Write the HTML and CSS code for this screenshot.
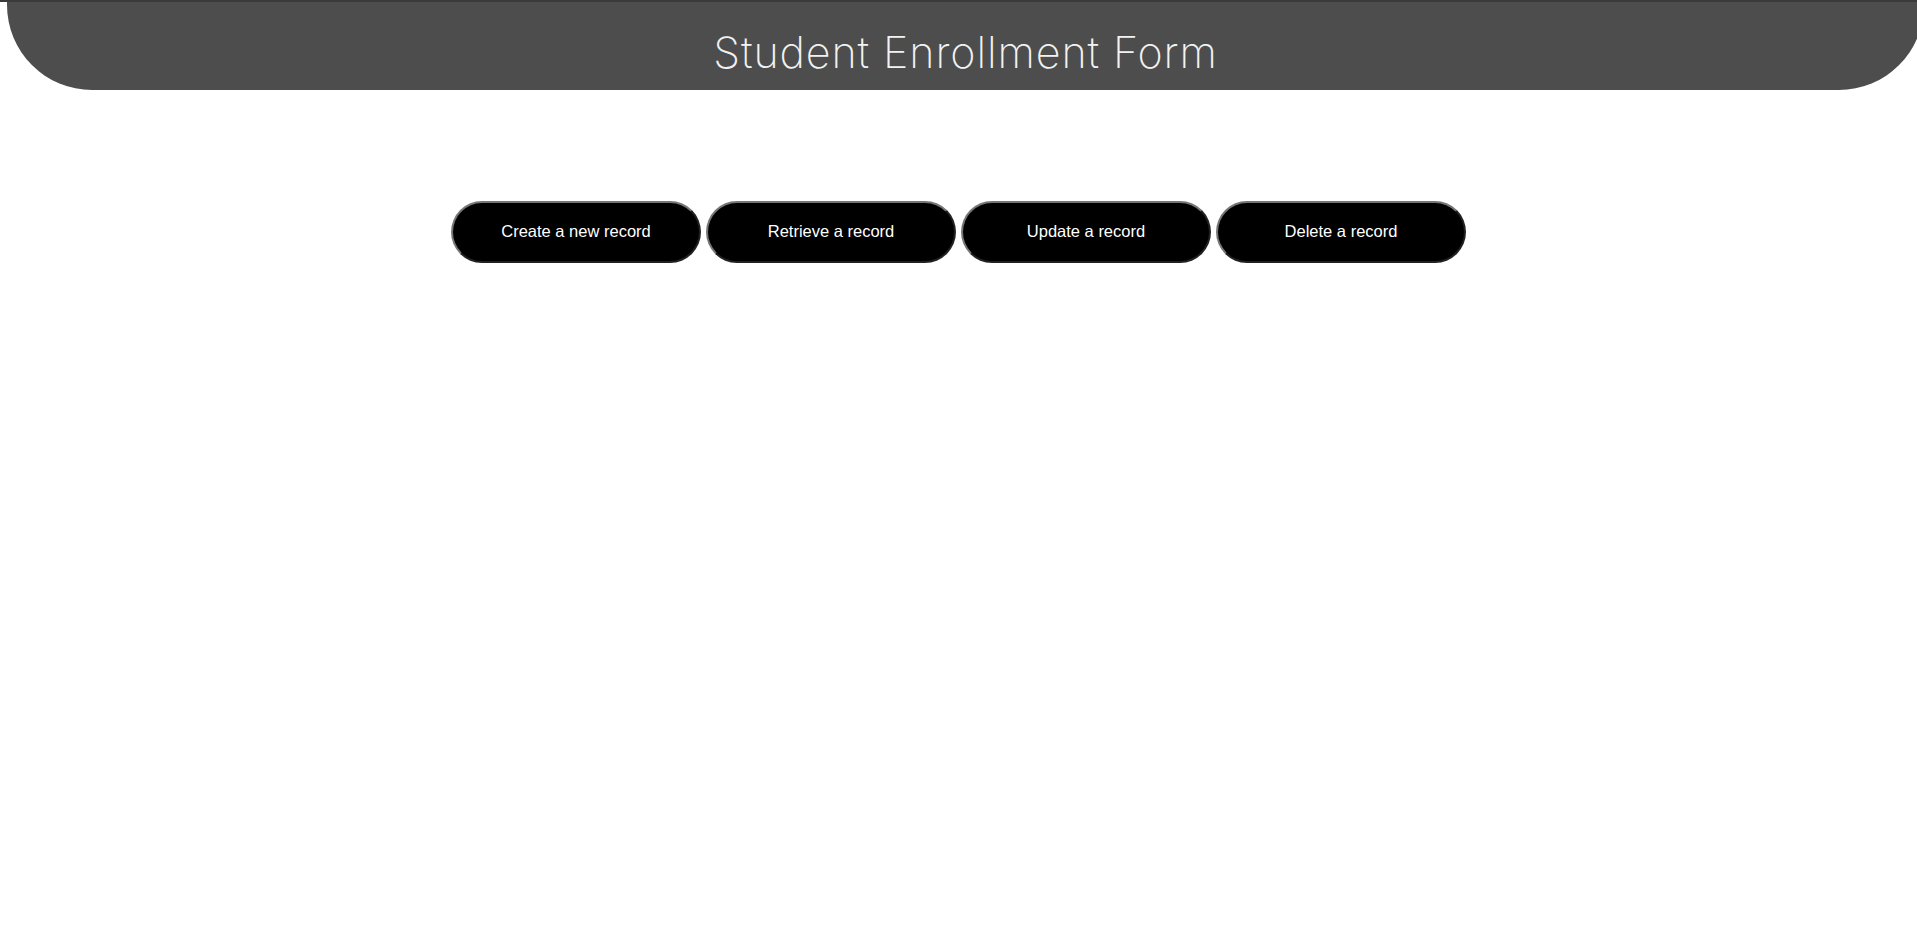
FILE: index.html
```html
<!DOCTYPE html>
<html lang="en">
<head>
<meta charset="utf-8">
<title>Student Enrollment Form</title>
<link rel="stylesheet" href="styles.css">
</head>
<body>
<div class="topline"></div>
<header class="header">
  <h1 class="title">Student Enrollment Form</h1>
</header>
<main class="actions">
  <button class="action-btn" type="button">Create a new record</button>
  <button class="action-btn" type="button">Retrieve a record</button>
  <button class="action-btn" type="button">Update a record</button>
  <button class="action-btn" type="button">Delete a record</button>
</main>
</body>
</html>
```
FILE: styles.css
```css
html, body {
  margin: 0;
  padding: 0;
  background: #ffffff;
  overflow-x: hidden;
}

.topline {
  height: 2px;
  background: #3a3a3a;
}

.header {
  width: 100%;
  height: 88px;
  margin-left: 7px;
  background: #4d4d4d;
  border-radius: 0 0 85px 85px;
  display: flex;
  justify-content: center;
  align-items: flex-start;
  box-sizing: border-box;
}

.title {
  margin: 0;
  padding-top: 24px;
  font-family: Inter, "Liberation Sans", sans-serif;
  font-weight: 200;
  font-size: 43px;
  line-height: 52px;
  letter-spacing: 0.9px;
  color: #f2f2f2;
}

.actions {
  display: flex;
  justify-content: center;
  gap: 5px;
  padding-top: 111px;
}

.action-btn {
  width: 250px;
  height: 62px;
  box-sizing: border-box;
  padding-bottom: 2px;
  background: #000000;
  color: #ffffff;
  border: 2px outset #767676;
  border-radius: 31px;
  font-family: "Liberation Sans", Arial, sans-serif;
  font-size: 16.5px;
  cursor: pointer;
}
```
